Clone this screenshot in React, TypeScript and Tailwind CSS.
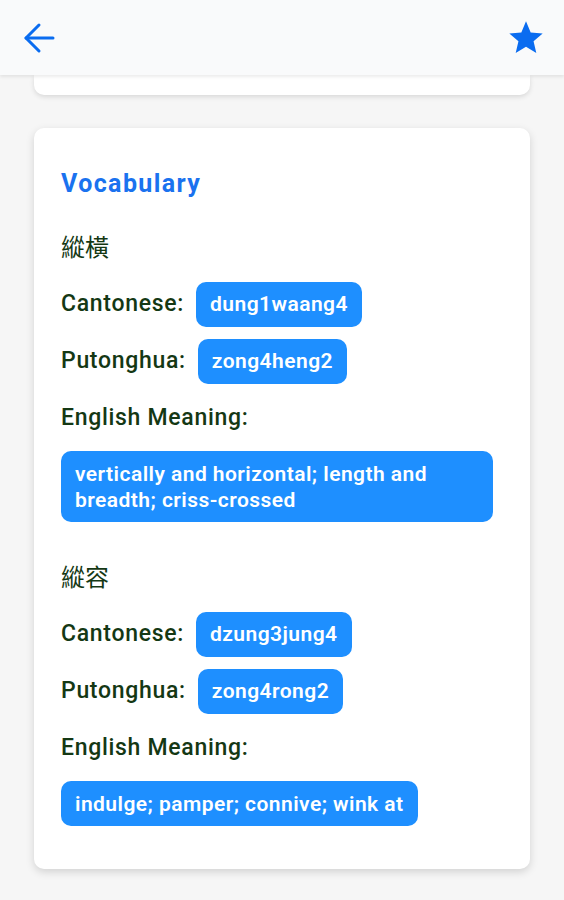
import React from "react";

const font = { fontFamily: "Roboto, 'Noto Sans CJK TC', sans-serif" };

function Chip({ children }: { children: React.ReactNode }) {
  return (
    <span className="inline-flex h-[45px] items-center rounded-[10px] bg-[#1e8fff] px-[14px] text-[21px] font-semibold tracking-[0.45px] text-white">
      {children}
    </span>
  );
}

function Label({ children }: { children: React.ReactNode }) {
  return (
    <span className="mr-[12px] text-[23px] font-medium tracking-[0.7px] text-[#143814]">{children}</span>
  );
}

function Entry({
  word,
  cant,
  pth,
  meaning,
  first,
}: {
  word: string;
  cant: string;
  pth: string;
  meaning: string;
  first?: boolean;
}) {
  return (
    <div className={first ? "mt-[33px]" : "mt-[41px]"}>
      <div className="text-[24px] leading-[30px] text-[#143814]">{word}</div>
      <div className="mt-[19px] flex items-center">
        <Label>Cantonese:</Label>
        <Chip>{cant}</Chip>
      </div>
      <div className="mt-[12px] flex items-center">
        <Label>Putonghua:</Label>
        <Chip>{pth}</Chip>
      </div>
      <div className="mt-[20px] text-[23px] font-medium leading-[28px] tracking-[0.7px] text-[#143814]">
        English Meaning:
      </div>
      <div className="mt-[19px]">
        <span className="inline-block max-w-[432px] rounded-[10px] bg-[#1e8fff] px-[14px] py-[9.5px] text-[21px] font-semibold leading-[26px] tracking-[0.45px] text-white">
          {meaning}
        </span>
      </div>
    </div>
  );
}

export default function App() {
  return (
    <div className="min-h-[900px] bg-[#f6f6f6]" style={font}>
      <div className="relative z-10 flex h-[75px] items-center justify-between bg-[#f9fafb] pl-[23px] pr-[18px] shadow-[0_2px_3px_rgba(0,0,0,0.08)]">
        <svg width="32" height="32" viewBox="0 0 32 32" fill="none" stroke="#0a6cf0" strokeWidth="3" strokeLinecap="round" strokeLinejoin="round">
          <path d="M30 16H3" />
          <path d="M16 3L3 16l13 13" />
        </svg>
        <svg width="40" height="40" viewBox="0 0 24 24" fill="#0a6cf0">
          <path d="M12 17.27L18.18 21l-1.64-7.03L22 9.24l-7.19-.61L12 2 9.19 8.63 2 9.24l5.46 4.73L5.82 21z" />
        </svg>
      </div>
      <div className="mx-[34px] h-[20px] rounded-b-[10px] bg-white shadow-[0_2px_5px_rgba(0,0,0,0.12)]" />
      <div className="mx-[34px] mt-[33px] rounded-[10px] bg-white px-[27px] pb-[43px] pt-[40px] shadow-[0_3px_8px_rgba(0,0,0,0.15)]">
        <div className="text-[25px] font-bold leading-[32px] tracking-[1.4px] text-[#1a72ef]">Vocabulary</div>
        <Entry
          first
          word="縱橫"
          cant="dung1waang4"
          pth="zong4heng2"
          meaning="vertically and horizontal; length and breadth; criss-crossed"
        />
        <Entry word="縱容" cant="dzung3jung4" pth="zong4rong2" meaning="indulge; pamper; connive; wink at" />
      </div>
    </div>
  );
}
